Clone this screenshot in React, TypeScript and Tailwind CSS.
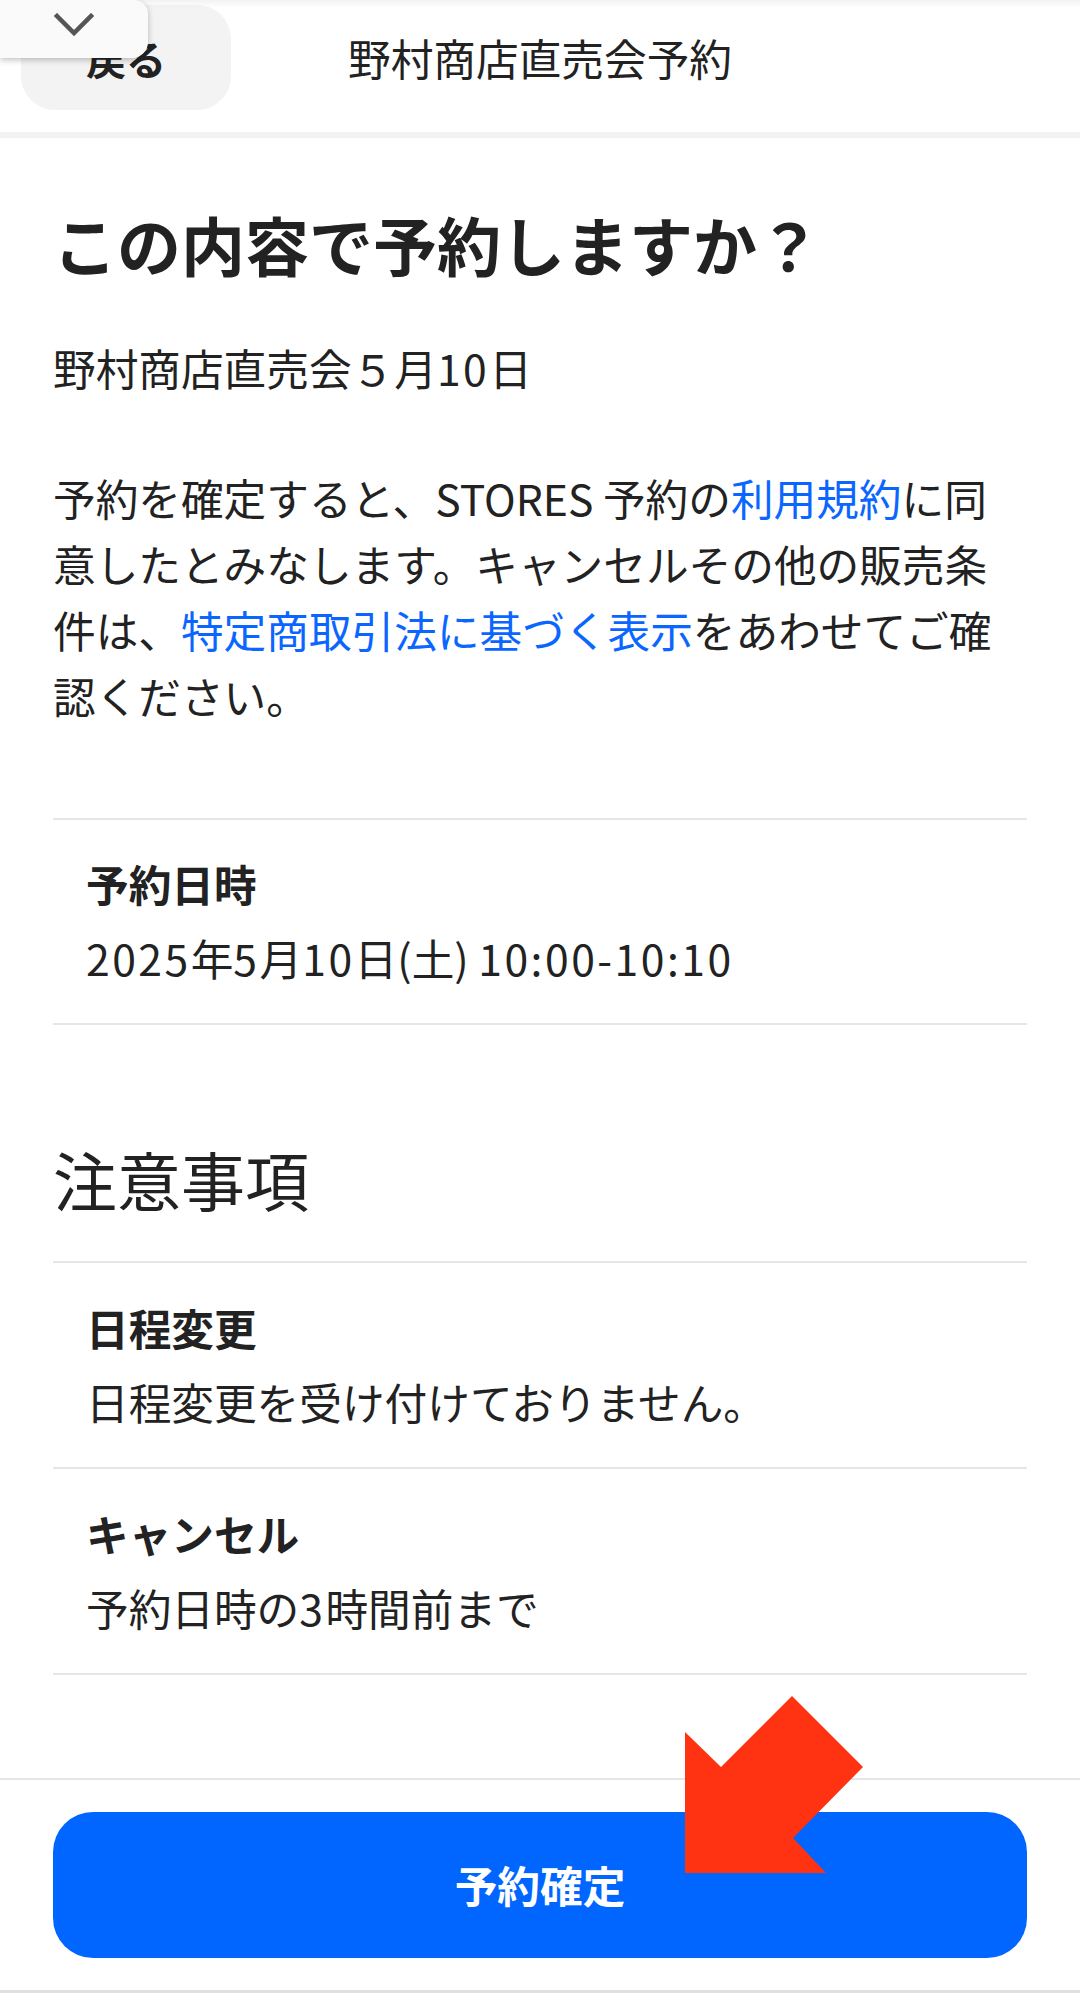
function Num({ children }: { children: string }) {
  // digits in the shot run a little wider than the CJK font's own
  return <span className="tracking-[2.5px]">{children}</span>;
}

export default function App() {
  const notices = [
    { title: "日程変更", body: <>日程変更を受け付けておりません。</> },
    {
      title: "キャンセル",
      body: (
        <>
          予約日時の<Num>3</Num>時間前まで
        </>
      ),
    },
  ];

  return (
    <div className="relative min-h-[2002px] bg-white font-['Noto_Sans_CJK_JP',sans-serif] text-[42.67px] text-[#222]">
      <header className="grid h-[132px] grid-cols-[210px_1fr_210px] items-start px-[21px] pt-[5px]">
        <button className="flex h-[105px] w-[210px] items-center justify-center rounded-[34px] bg-[#f3f3f3] text-[40px] font-bold text-[#222]">
          戻る
        </button>
        <div className="flex h-[105px] items-center justify-center text-[42.67px]">
          野村商店直売会予約
        </div>
        <div />
      </header>
      <div className="h-[6px] bg-[#f2f2f2]" />

      <main className="px-[53px]">
        <h1 className="mt-[61px] text-[64px] font-bold leading-[88px]">
          この内容で予約しますか？
        </h1>
        <p className="mt-[48px] leading-[66px]">
          野村商店直売会５月<Num>10</Num>日
        </p>
        <p className="mt-[64px] leading-[66px]">
          予約を確定すると、STORES 予約の
          <a className="text-[#0a66ff]">利用規約</a>に同
          <br />
          意したとみなします。キャンセルその他の販売条
          <br />
          件は、<a className="text-[#0a66ff]">特定商取引法に基づく表示</a>
          をあわせてご確
          <br />
          認ください。
        </p>

        <div className="mt-[89px] border-y-2 border-[#e6e6e6] px-[33px] pb-[32px] pt-[31px]">
          <div className="font-bold leading-[66px]">予約日時</div>
          <div className="mt-[8px] leading-[66px]">
            <Num>2025</Num>年<Num>5</Num>月<Num>10</Num>日(土) <Num>10:00-10:10</Num>
          </div>
        </div>

        <h2 className="mt-[106px] text-[64px] leading-[94px]">注意事項</h2>
        <div className="mt-[36px] border-t-2 border-[#e6e6e6]">
          {notices.map((n) => (
            <div
              key={n.title}
              className="border-b-2 border-[#e6e6e6] px-[33px] pb-[32px] pt-[32px]"
            >
              <div className="font-bold leading-[66px]">{n.title}</div>
              <div className="mt-[8px] leading-[66px]">{n.body}</div>
            </div>
          ))}
        </div>
      </main>

      <footer className="mt-[103px] border-t-2 border-[#e6e6e6] px-[53px] pb-[32px] pt-[32px]">
        <button className="flex h-[146px] w-full items-center justify-center rounded-[40px] bg-[#0066ff] text-[42.67px] font-bold text-white">
          予約確定
        </button>
      </footer>
      <div className="h-[3px] bg-[#e0e0e0]" />

      {/* top shade + collapsed tab */}
      <div className="pointer-events-none absolute left-0 right-0 top-0 h-[8px] bg-gradient-to-b from-black/5 to-transparent" />
      <div className="absolute left-0 top-0 flex h-[58px] w-[148px] items-start justify-center rounded-br-[16px] rounded-tr-[14px] bg-[#fafafa] pt-[13px] shadow-[0_2px_6px_rgba(0,0,0,0.25)]">
        <svg width="40" height="24" viewBox="0 0 40 24" fill="none">
          <polyline
            points="3,3 20,20 37,3"
            stroke="#555"
            strokeWidth="4.5"
            strokeLinecap="square"
          />
        </svg>
      </div>

      {/* annotation arrow */}
      <svg
        className="pointer-events-none absolute left-0 top-0"
        width="1080"
        height="2002"
        viewBox="0 0 1080 2002"
      >
        <polygon
          points="685,1732 721,1767 792,1696 863,1767 793,1838 826,1873 685,1873"
          fill="#ff3311"
        />
      </svg>
    </div>
  );
}
